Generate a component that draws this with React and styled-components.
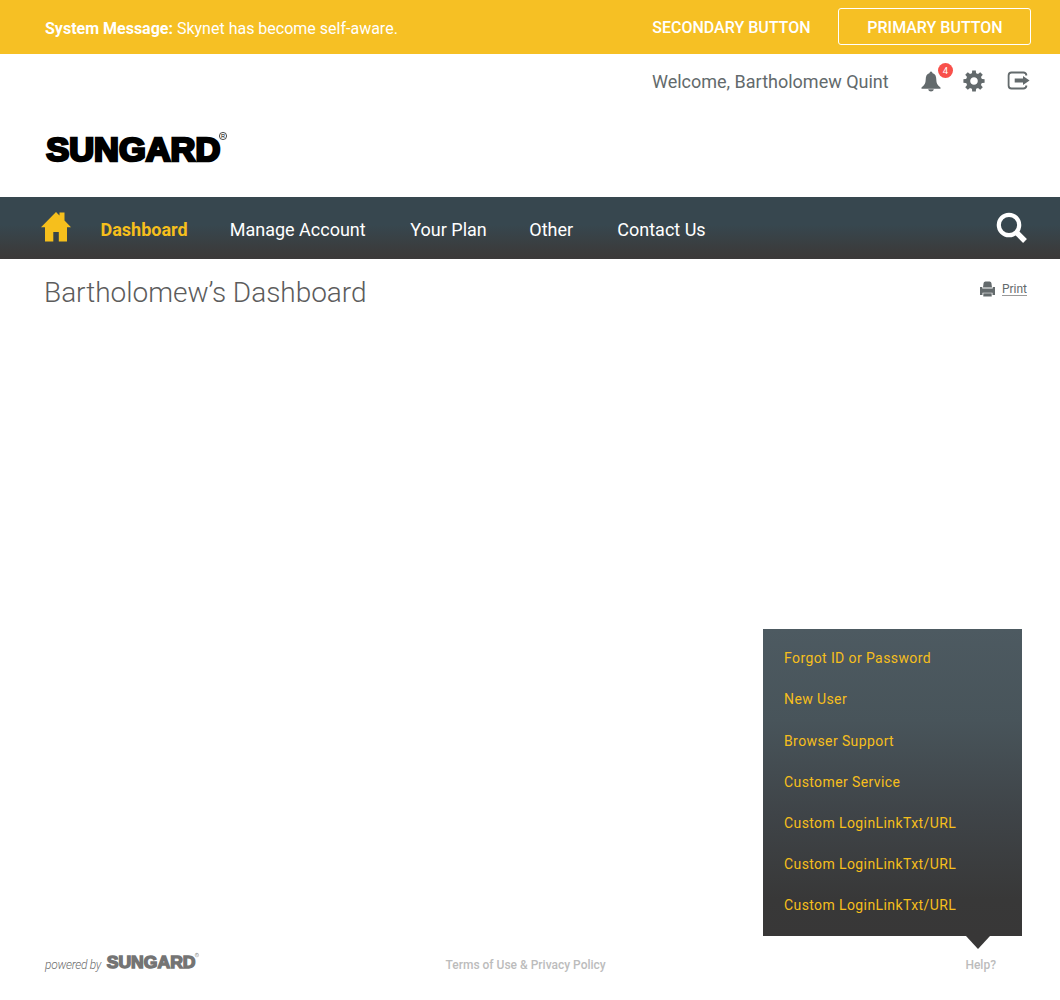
import React from "react";
import styled, { createGlobalStyle } from "styled-components";

const GlobalStyle = createGlobalStyle`
  * { box-sizing: border-box; }
  body { margin: 0; background: #fff; font-family: Roboto, "Liberation Sans", sans-serif; }
  a { color: inherit; text-decoration: none; }
  svg { display: block; flex: none; }
`;

const Page = styled.div`
  width: 1060px;
  height: 1000px;
  display: flex;
  flex-direction: column;
  overflow: hidden;
`;

const MessageBar = styled.div`
  height: 54px;
  display: flex;
  align-items: center;
  justify-content: space-between;
  padding: 0 29px 0 45px;
  background: #f6c024;
  color: #fff;
`;

const Message = styled.p`
  margin: 0;
  padding-top: 3px;
  font-size: 16px;
  line-height: 20px;
`;

const Actions = styled.div`
  display: flex;
  align-items: center;
  gap: 27.5px;
  padding-bottom: 1px;
`;

const Button = styled.button`
  width: ${(p) => (p.$outlined ? "193px" : "auto")};
  height: 37px;
  padding: ${(p) => (p.$outlined ? "3px 0 0 1px" : "3px 0 0")};
  border: ${(p) => (p.$outlined ? "1px solid #fff" : "0")};
  border-radius: 3px;
  background: transparent;
  color: #fff;
  font: 500 16px/20px Roboto, sans-serif;
  text-transform: uppercase;
`;

const Header = styled.header`
  height: 143px;
  padding: 0 30px 0 45px;
`;

const UserBar = styled.div`
  height: 56px;
  display: flex;
  align-items: center;
  justify-content: flex-end;
  color: #636a6c;
`;

const Welcome = styled.span`
  margin-right: 32.3px;
  font-size: 18px;
  line-height: 24px;
`;

const Tools = styled.div`
  display: flex;
  align-items: center;
  gap: 22px;
  margin-bottom: 2px;
`;

const Bell = styled.span`
  position: relative;
`;

const Badge = styled.span`
  position: absolute;
  left: 17px;
  top: -8px;
  width: 15px;
  height: 15px;
  border-radius: 50%;
  background: #f8504a;
  color: #fff;
  font-size: 9.5px;
  line-height: 15px;
  text-align: center;
`;

const LogoRow = styled.div`
  padding-top: 20px;
`;

const Nav = styled.nav`
  height: 62px;
  display: flex;
  align-items: center;
  padding: 0 32px 0 41px;
  background: linear-gradient(#37474f 0%, #37474f 45%, #3b3b3b 90%, #3b3939 100%);
`;

const HomeLink = styled.a`
  margin-right: 29.5px;
  padding-bottom: 3px;
`;

const NavItems = styled.div`
  flex: 1;
  display: flex;
  padding-top: 4px;
`;

const NavLink = styled.a`
  width: ${(p) => p.$width}px;
  color: ${(p) => (p.$active ? "#f6bf1c" : "#fff")};
  font-size: 18px;
  font-weight: ${(p) => (p.$active ? 700 : 400)};
  line-height: 24px;
  white-space: nowrap;
`;

const Main = styled.main`
  flex: 1;
  display: flex;
  align-items: flex-start;
  justify-content: space-between;
  padding: 15px 33px 0 44px;
`;

const Title = styled.h1`
  margin: 0;
  color: #5c5c5c;
  font-size: 28px;
  font-weight: 300;
  line-height: 37px;
  letter-spacing: -0.03px;
`;

const Print = styled.a`
  display: flex;
  align-items: center;
  gap: 7px;
  margin-top: 7px;
  color: #636a6c;
`;

const PrintLabel = styled.span`
  border-bottom: 1px solid #999;
  font-size: 12px;
  line-height: 12px;
`;

const Footer = styled.footer`
  height: 60px;
  display: flex;
  justify-content: space-between;
  align-items: start;
  padding: 10px 64px 0 45px;
  color: #bcbcbc;
  font-size: 12px;
  font-weight: 500;
  line-height: 30px;
`;

const Powered = styled.div`
  width: 156px;
  display: flex;
  gap: 5px;
  margin-right: 43px;
  color: #6f6f6f;
  font-size: 12px;
  font-style: italic;
  font-weight: 300;
  letter-spacing: -0.28px;

  svg {
    margin-top: 2px;
  }
`;

const Terms = styled.a`
  flex: 1;
  margin-left: 201.5px;
`;

const Help = styled.div`
  position: relative;
`;

const HelpMenu = styled.div`
  position: absolute;
  right: -26px;
  bottom: 44px;
  width: 259px;
  height: 307px;
  padding: 9.3px 21px;
  display: flex;
  flex-direction: column;
  background: linear-gradient(#4d5a61 0%, #48545a 30%, #3f4448 60%, #383838 88%, #383737 100%);

  &::after {
    content: "";
    position: absolute;
    top: 100%;
    right: 32px;
    border: solid transparent;
    border-width: 13px 12px 0;
    border-top-color: #383737;
  }
`;

const HelpLink = styled.a`
  color: #f6bf1c;
  font-size: 14px;
  font-weight: 400;
  line-height: 41.15px;
  letter-spacing: 0.4px;
  white-space: nowrap;
`;

const Logo = ({ width, color }) => (
  <svg width={width} height={(width * 40) / 184} viewBox="0 0 184 40" role="img">
    <text x="1.3" y="30.8" textLength="174" lengthAdjust="spacingAndGlyphs" fill={color} stroke={color}
      strokeWidth="2.6" fontFamily="Liberation Sans, Arial, sans-serif" fontStyle="normal" fontWeight="700"
      fontSize="32.5" letterSpacing="0">SUNGARD</text>
    <circle cx="178" cy="6" r="3.6" fill="none" stroke={color} strokeWidth="0.7" />
    <text x="178" y="7.9" textAnchor="middle" fill={color} fontFamily="Liberation Sans, Arial, sans-serif"
      fontStyle="normal" fontWeight="400" fontSize="5.6" letterSpacing="0">R</text>
  </svg>
);

const BellIcon = () => (
  <svg width="20" height="21" viewBox="0 0 20 21" fill="currentColor">
    <path d="M8.7 1.2Q10 -.3 11.3 1.2V2.1C14.4 3 15.2 5.2 15.3 8.5C15.4 12.3 16.3 14 19.5 16.4V17.8H.5V16.4C3.7 14 4.6 12.3 4.7 8.5C4.8 5.2 5.6 3 8.7 2.1Z" />
    <path d="M7.2 18.2H12.8C12.4 21.2 7.6 21.2 7.2 18.2Z" />
  </svg>
);

const GearIcon = () => (
  <svg width="22" height="22" viewBox="-11 -11 22 22" fill="currentColor">
    {[0, 45, 90, 135, 180, 225, 270, 315].map((angle) => (
      <path key={angle} d="M-2.2-6.5L-1.8-10.6H1.8L2.2-6.5Z" transform={`rotate(${angle})`} />
    ))}
    <circle r="5.9" fill="none" stroke="currentColor" strokeWidth="4.2" />
  </svg>
);

const LogoutIcon = () => (
  <svg width="23" height="20" viewBox="0 0 23 20">
    <path d="M19.5 4.5Q19 1.5 16.5 1.5H4.5Q1.6 1.5 1.6 4.5V14.5Q1.6 17.5 4.5 17.5H16.5Q19 17.5 19.5 14.5" fill="none" stroke="currentColor" strokeWidth="1.8" />
    <path d="M7.7 7.6H16V4.9L22.6 9.5L16 14.1V11.4H7.7Z" fill="currentColor" />
  </svg>
);

const HomeIcon = () => (
  <svg width="30" height="30" viewBox="0 0 30 30" fill="#f6bf1c">
    <path d="M0 15.2L15 0L18.5 3.5V.5H23.5V8.6L30 15.2H26V29.6H17.8V20H12.3V29.6H4V15.2Z" />
  </svg>
);

const SearchIcon = () => (
  <svg width="32" height="32" viewBox="0 0 32 32" fill="none" stroke="#fff">
    <circle cx="13" cy="13" r="10.2" strokeWidth="4.2" />
    <path d="M20 20L29 29" strokeWidth="5.4" />
  </svg>
);

const PrinterIcon = () => (
  <svg width="15" height="16" viewBox="0 0 15 16" fill="currentColor">
    <path d="M3 6.6L3.6 2Q3.8 .4 5.4.4H9.6Q11.2 .4 11.4 2L12 6.6Z" />
    <path d="M0 6H2.3V7.6H12.7V6H15V14H12.5V11.8H2.5V14H0Z" />
    <path d="M3.3 12.3H11.7V15.5H3.3Z" />
  </svg>
);

const navLinks = [
  { label: "Dashboard", width: 129.2, active: true },
  { label: "Manage Account", width: 180.6 },
  { label: "Your Plan", width: 119 },
  { label: "Other", width: 88 },
  { label: "Contact Us", width: 90 },
];

const helpLinks = [
  "Forgot ID or Password",
  "New User",
  "Browser Support",
  "Customer Service",
  "Custom LoginLinkTxt/URL",
  "Custom LoginLinkTxt/URL",
  "Custom LoginLinkTxt/URL",
];

export default function App() {
  return (
    <Page>
      <GlobalStyle />
      <MessageBar>
        <Message><b>System Message:</b> Skynet has become self-aware.</Message>
        <Actions>
          <Button>Secondary Button</Button>
          <Button $outlined>Primary Button</Button>
        </Actions>
      </MessageBar>
      <Header>
        <UserBar>
          <Welcome>Welcome, Bartholomew Quint</Welcome>
          <Tools>
            <Bell><BellIcon /><Badge>4</Badge></Bell>
            <GearIcon />
            <LogoutIcon />
          </Tools>
        </UserBar>
        <LogoRow><Logo width={184} color="#000" /></LogoRow>
      </Header>
      <Nav>
        <HomeLink href="#"><HomeIcon /></HomeLink>
        <NavItems>
          {navLinks.map((link) => (
            <NavLink key={link.label} href="#" $width={link.width} $active={link.active}>{link.label}</NavLink>
          ))}
        </NavItems>
        <SearchIcon />
      </Nav>
      <Main>
        <Title>Bartholomew’s Dashboard</Title>
        <Print href="#"><PrinterIcon /><PrintLabel>Print</PrintLabel></Print>
      </Main>
      <Footer>
        <Powered>powered by <Logo width={94} color="#747474" /></Powered>
        <Terms href="#">Terms of Use &amp; Privacy Policy</Terms>
        <Help>
          Help?
          <HelpMenu>
            {helpLinks.map((label, i) => <HelpLink key={i} href="#">{label}</HelpLink>)}
          </HelpMenu>
        </Help>
      </Footer>
    </Page>
  );
}
